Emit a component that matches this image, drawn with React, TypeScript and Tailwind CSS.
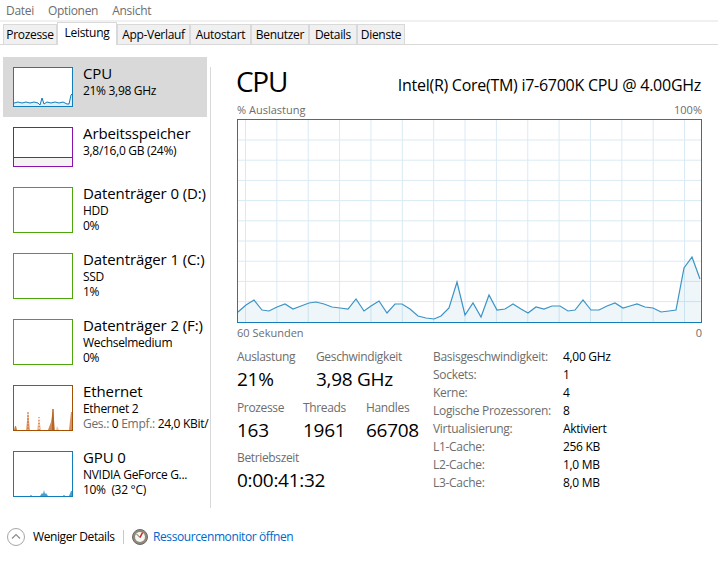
import type { ReactNode } from 'react';

const FONT = "font-['Open_Sans','Noto_Sans',sans-serif]";

const tabs = [
  { name: 'Prozesse', w: 'w-[54px]' },
  { name: 'Leistung', w: 'w-[60px]', active: true },
  { name: 'App-Verlauf', w: 'w-[73px]' },
  { name: 'Autostart', w: 'w-[61px]' },
  { name: 'Benutzer', w: 'w-[58px]' },
  { name: 'Details', w: 'w-[48px]' },
  { name: 'Dienste', w: 'w-[48px]' },
];

// CPU-Verlauf, abgelesen aus dem Diagramm (y in Pixeln innerhalb des Diagramms)
const cpuPoints: [number, number][] = [
  [0, 192], [8, 185], [16, 180], [24, 190], [31, 191], [39, 187], [47, 184], [55, 189], [63, 186], [71, 183],
  [78, 182], [86, 184], [94, 187], [102, 188], [110, 189], [118, 179], [126, 191], [133, 186], [141, 181], [149, 193],
  [157, 184], [164, 184], [172, 189], [180, 196], [188, 198], [196, 199], [203, 196], [211, 188], [219, 162], [227, 195],
  [235, 183], [243, 197], [251, 175], [259, 190], [267, 189], [275, 184], [283, 189], [290, 193], [298, 187], [306, 189],
  [314, 186], [322, 186], [330, 191], [337, 190], [345, 180], [353, 190], [361, 190], [369, 186], [377, 183], [385, 188],
  [392, 186], [399, 184], [407, 187], [415, 188], [423, 192], [431, 191], [438, 190], [446, 148], [454, 137], [462, 159],
];

function CpuChart() {
  const line = cpuPoints.map(([x, y]) => `${x + 1},${y + 1}`).join(' ');
  const vertical = Array.from({ length: 15 }, (_, i) => 8.5 + i * 31.36);
  const horizontal = Array.from({ length: 9 }, (_, i) => 21 + i * 20.2);
  return (
    <svg width="465" height="204" viewBox="0 0 465 204" className="block">
      <rect x="0" y="0" width="465" height="204" fill="#ffffff" />
      {vertical.map((x) => (
        <line key={x} x1={x} x2={x} y1="1" y2="203" stroke="#d9eaf4" strokeWidth="1" />
      ))}
      {horizontal.map((y) => (
        <line key={y} x1="1" x2="464" y1={y} y2={y} stroke="#d9eaf4" strokeWidth="1" />
      ))}
      <polygon points={`1,203 ${line} 464,203`} fill="#117dbb" fillOpacity="0.07" />
      <polyline points={line} fill="none" stroke="#3b93c6" strokeWidth="1.2" />
      <rect x="0.5" y="0.5" width="464" height="203" fill="none" stroke="#117dbb" strokeWidth="1" />
    </svg>
  );
}

function Thumb({ color, h = 40, children }: { color: string; h?: number; children?: ReactNode }) {
  return (
    <svg width="60" height={h} viewBox={`0 0 60 ${h}`} className="block shrink-0">
      <rect x="0" y="0" width="60" height={h} fill="#ffffff" />
      {children}
      <rect x="0.5" y="0.5" width="59" height={h - 1} fill="none" stroke={color} strokeWidth="1" />
    </svg>
  );
}

function SidebarItem({
  title,
  sub,
  third,
  thumb,
  active,
}: {
  title: string;
  sub: ReactNode;
  third?: ReactNode;
  thumb: ReactNode;
  active?: boolean;
}) {
  return (
    <div className={`flex pl-[10px] pt-[10px] overflow-hidden ${third ? 'h-[66px]' : 'h-[60px]'} ${active ? 'bg-[#d9d9d9] mr-[3px]' : ''}`}>
      {thumb}
      <div className="ml-[10px] min-w-0 flex-1 text-black whitespace-nowrap">
        <div className="text-[15px] leading-[16px] mt-[-2px] tracking-[-0.1px]">{title}</div>
        <div className="text-[12px] leading-[16px] mt-[2px] tracking-[-0.3px]">{sub}</div>
        {third && <div className="text-[12px] leading-[14px] tracking-[-0.3px]">{third}</div>}
      </div>
    </div>
  );
}

function Stat({ label, value, className = '' }: { label: string; value: string; className?: string }) {
  return (
    <div className={className}>
      <div className="text-[12px] leading-[16px] text-[#6d6d6d] tracking-[-0.35px]">{label}</div>
      <div className="text-[19px] leading-[24px] mt-[2px] text-black tracking-[-0.3px]">{value}</div>
    </div>
  );
}

const specs = [
  ['Basisgeschwindigkeit:', '4,00 GHz'],
  ['Sockets:', '1'],
  ['Kerne:', '4'],
  ['Logische Prozessoren:', '8'],
  ['Virtualisierung:', 'Aktiviert'],
  ['L1-Cache:', '256 KB'],
  ['L2-Cache:', '1,0 MB'],
  ['L3-Cache:', '8,0 MB'],
];

export default function App() {
  return (
    <div className={`${FONT} w-[718px] h-[561px] bg-white overflow-hidden`}>
      {/* Menü */}
      <div className="h-[18px] flex items-center gap-[14px] pl-[6px] pt-[2px] text-[12px] text-[#6d6d6d] tracking-[-0.3px] border-b-2 border-[#f0f0f0] box-content">
        <span>Datei</span>
        <span>Optionen</span>
        <span>Ansicht</span>
      </div>

      {/* Tabs */}
      <div className="h-[22px] flex items-end pl-[3px] border-b border-[#d9d9d9] box-content">
        {tabs.map((t) =>
          t.active ? (
            <div
              key={t.name}
              className={`${t.w} h-[23px] mb-[-1px] bg-white border border-b-0 border-[#d9d9d9] text-center text-[12px] leading-[20px] text-black tracking-[-0.3px]`}
            >
              {t.name}
            </div>
          ) : (
            <div
              key={t.name}
              className={`${t.w} h-[20px] bg-[#f0f0f0] border-t border-r border-l border-[#d9d9d9] text-center text-[12px] leading-[20px] text-black tracking-[-0.3px]`}
            >
              {t.name}
            </div>
          ),
        )}
      </div>

      <div className="flex h-[477px]">
        {/* Seitenleiste */}
        <div className="w-[207px] ml-[3px] pt-[12px] shrink-0">
          <SidebarItem
            active
            title="CPU"
            sub="21%  3,98 GHz"
            thumb={
              <Thumb color="#117dbb">
                <polygon
                  points="1,39 1,36 5,35 9,36 13,35 17,36 21,35 25,36 27,38 29,31 31,37 34,35 38,36 42,35 46,36 50,35 54,37 56,37 58,28 59,27 59,39"
                  fill="#117dbb"
                  fillOpacity="0.12"
                />
                <polyline
                  points="1,36 5,35 9,36 13,35 17,36 21,35 25,36 27,38 29,31 31,37 34,35 38,36 42,35 46,36 50,35 54,37 56,37 58,28 59,27"
                  fill="none"
                  stroke="#117dbb"
                  strokeWidth="1"
                />
              </Thumb>
            }
          />
          <SidebarItem
            title="Arbeitsspeicher"
            sub="3,8/16,0 GB (24%)"
            thumb={
              <Thumb color="#8b12ae">
                <rect x="1" y="30" width="58" height="9" fill="#f4f2f4" />
                <line x1="1" x2="59" y1="30.5" y2="30.5" stroke="#8b12ae" />
              </Thumb>
            }
          />
          <SidebarItem title="Datenträger 0 (D:)" sub="HDD" third="0%" thumb={<Thumb color="#4da60c" h={46} />} />
          <SidebarItem title="Datenträger 1 (C:)" sub="SSD" third="1%" thumb={<Thumb color="#4da60c" h={46} />} />
          <SidebarItem title="Datenträger 2 (F:)" sub="Wechselmedium" third="0%" thumb={<Thumb color="#4da60c" h={46} />} />
          <SidebarItem
            title="Ethernet"
            sub="Ethernet 2"
            third={
              <>
                <span className="text-[#6d6d6d]">Ges.:</span> 0 <span className="text-[#6d6d6d]">Empf.:</span> 24,0 KBit/
              </>
            }
            thumb={
              <Thumb color="#a74f01" h={46}>
                <polygon points="1,45 2,41 3,41 4,45" fill="#a74f01" fillOpacity="0.7" />
                <polygon points="13,45 15,27 17,45" fill="#e8a27a" />
                <line x1="15" x2="15" y1="27" y2="45" stroke="#c9622a" strokeDasharray="2 1" />
                <polygon points="24,45 26,32 28,45" fill="#f0c2a6" />
                <line x1="26" x2="26" y1="32" y2="45" stroke="#c9622a" strokeDasharray="1 2" />
                <polygon points="35,45 38,37 40,24 42,45" fill="#c98a5c" />
                <line x1="40" x2="40" y1="24" y2="45" stroke="#a74f01" strokeWidth="1.2" />
                <polygon points="43,45 44,41 46,45" fill="#f0c2a6" />
                <polygon points="56,45 58,27 59,27 59,45" fill="#c9622a" fillOpacity="0.7" />
              </Thumb>
            }
          />
          <SidebarItem
            title="GPU 0"
            sub="NVIDIA GeForce G..."
            third={'10%\u00a0 (32 °C)'}
            thumb={
              <Thumb color="#117dbb" h={46}>
                <polygon points="27,45 29,42 30,43 31,39 32,43 33,42 35,45" fill="#117dbb" fillOpacity="0.75" />
                <line x1="18" x2="18" y1="44" y2="45" stroke="#117dbb" />
                <line x1="51" x2="51" y1="44" y2="45" stroke="#117dbb" />
                <polygon points="56,45 58,40 59,40 59,45" fill="#117dbb" fillOpacity="0.75" />
              </Thumb>
            }
          />
        </div>

        {/* Trennlinie */}
        <div className="w-px h-[441px] mt-[22px] bg-[#d9d9d9] shrink-0" />

        {/* Hauptbereich */}
        <div className="w-[465px] ml-[26px] shrink-0">
          <div className="flex justify-between items-end h-[54px] pt-[19px] pb-[1px]">
            <div className="text-[28px] leading-[34px] text-black ml-[-1px] tracking-[-1.3px]">CPU</div>
            <div className="text-[16px] leading-[20px] text-black pb-[3px] pr-[1px] tracking-[-0.27px]">Intel(R) Core(TM) i7-6700K CPU @ 4.00GHz</div>
          </div>
          <div className="flex justify-between h-[20px] pt-[3px] text-[11px] leading-[15px] text-[#6d6d6d]">
            <span>% Auslastung</span>
            <span>100%</span>
          </div>
          <CpuChart />
          <div className="flex justify-between h-[20px] pt-[2px] text-[11px] leading-[15px] text-[#6d6d6d]">
            <span>60 Sekunden</span>
            <span>0</span>
          </div>

          <div className="flex mt-[6px]">
            <div className="w-[196px] shrink-0">
              <div className="flex">
                <Stat label="Auslastung" value="21%" className="w-[79px]" />
                <Stat label="Geschwindigkeit" value="3,98 GHz" />
              </div>
              <div className="flex mt-[9px]">
                <Stat label="Prozesse" value="163" className="w-[66px]" />
                <Stat label="Threads" value="1961" className="w-[63px]" />
                <Stat label="Handles" value="66708" />
              </div>
              <Stat label="Betriebszeit" value="0:00:41:32" className="mt-[8px]" />
            </div>
            <div className="grid grid-cols-[130px_1fr] auto-rows-[18px] text-[12px] leading-[16px] tracking-[-0.3px]">
              {specs.map(([k, v]) => (
                <div key={k} className="contents">
                  <div className="text-[#6d6d6d]">{k}</div>
                  <div className="text-black">{v}</div>
                </div>
              ))}
            </div>
          </div>
        </div>
      </div>

      {/* Fußleiste */}
      <div className="flex items-center h-[30px] pl-[7px] text-[12px] tracking-[-0.4px]">
        <svg width="18" height="18" viewBox="0 0 18 18" className="shrink-0">
          <circle cx="9" cy="9" r="8.5" fill="#ffffff" stroke="#a6a6a6" />
          <path d="M5 10.5 L9 6.5 L13 10.5" fill="none" stroke="#8c8c8c" strokeWidth="1.2" />
        </svg>
        <span className="ml-[8px] w-[90px] text-black">Weniger Details</span>
        <div className="w-px h-[14px] bg-[#c8c8c8] shrink-0" />
        <svg width="16" height="16" viewBox="0 0 16 16" className="ml-[8px] shrink-0">
          <circle cx="8" cy="8" r="7.5" fill="#8f8a80" stroke="#6e6a62" />
          <circle cx="8" cy="8" r="5" fill="#f7f5f0" />
          <path d="M10.5 3.5 L8 8.5" stroke="#c8281e" strokeWidth="1.6" />
          <path d="M4.5 5 L8 8.5" stroke="#3a3a3a" strokeWidth="0.8" />
        </svg>
        <span className="ml-[5px] text-[#0066cc] whitespace-nowrap">Ressourcenmonitor öffnen</span>
      </div>
    </div>
  );
}
